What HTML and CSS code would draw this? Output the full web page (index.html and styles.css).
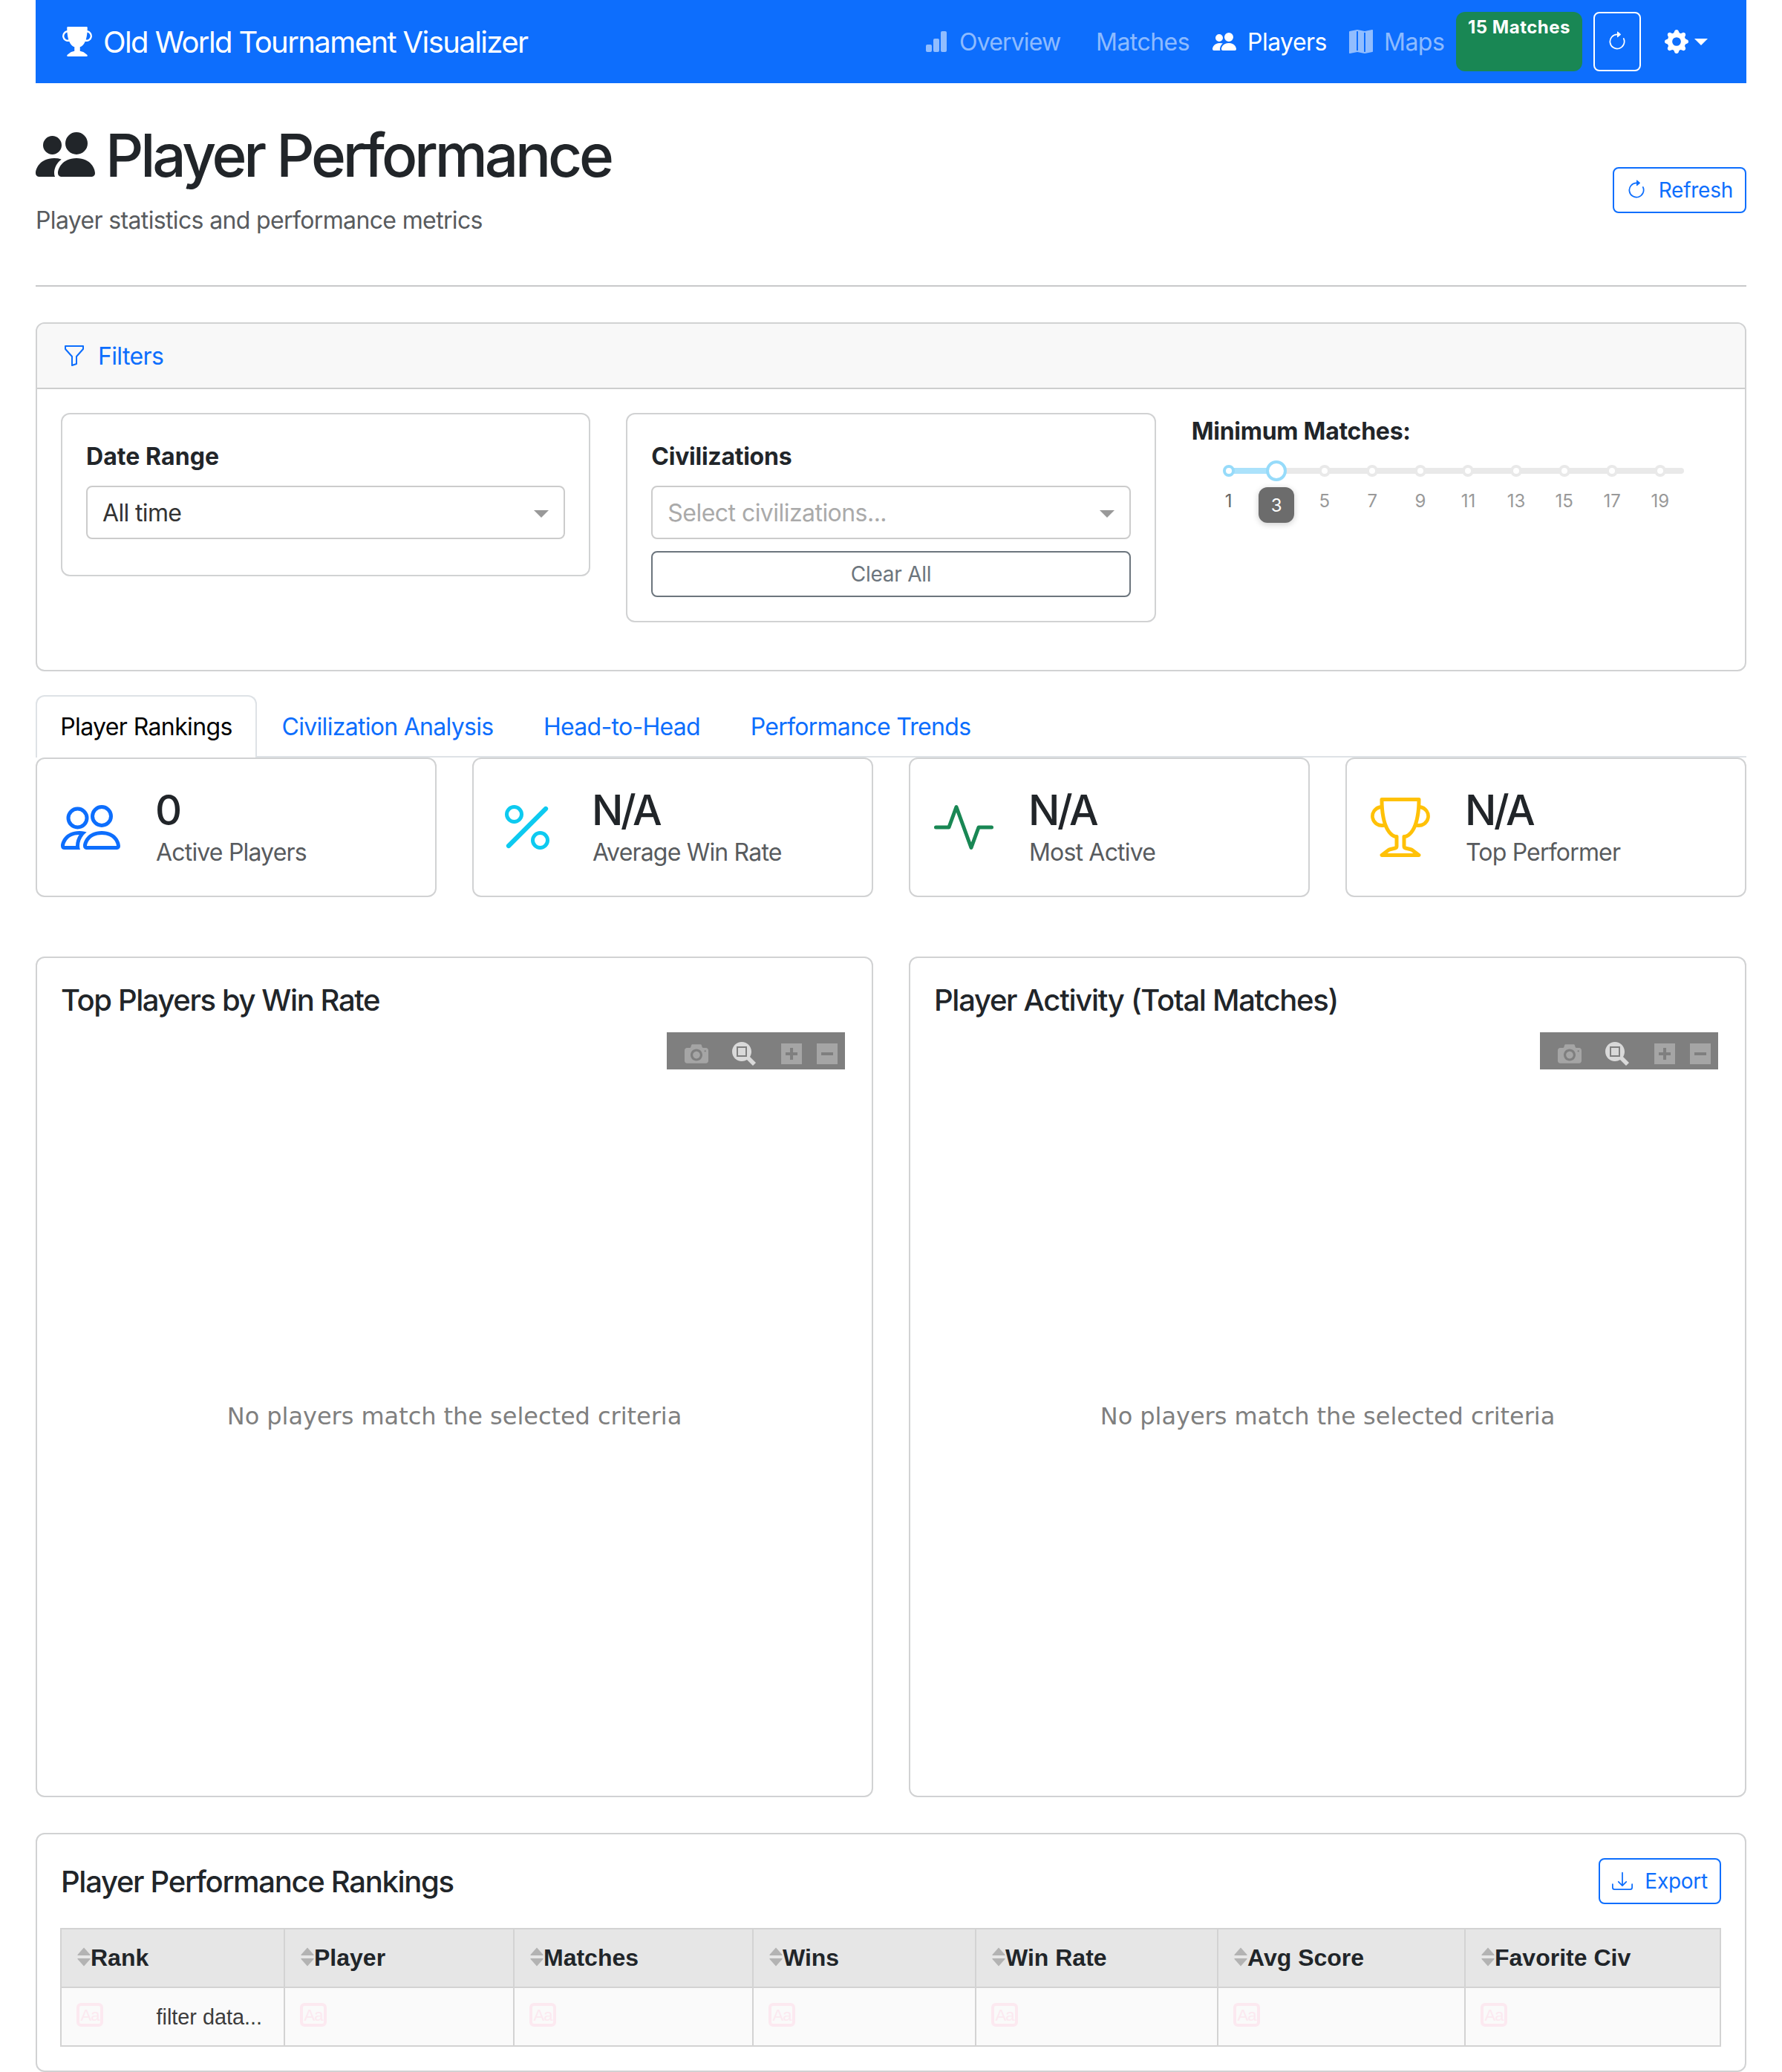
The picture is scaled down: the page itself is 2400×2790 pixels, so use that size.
FILE: index.html
```html
<!DOCTYPE html>
<html lang="en">
<head>
<meta charset="utf-8">
<title>Old World Tournament Visualizer</title>
<link rel="stylesheet" href="styles.css">
</head>
<body>
<svg class="sprite" aria-hidden="true">
  <symbol id="trophy-fill" viewBox="0 0 16 16"><path d="M2.5.5A.5.5 0 0 1 3 0h10a.5.5 0 0 1 .5.5q0 .807-.034 1.536a3 3 0 1 1-1.133 5.89c-.79 1.865-1.878 2.777-2.833 3.011v2.173l1.425.356c.194.048.377.135.537.255L13.3 15.1a.5.5 0 0 1-.3.9H3a.5.5 0 0 1-.3-.9l1.838-1.379c.16-.12.343-.207.537-.255L6.5 13.11v-2.173c-.955-.234-2.043-1.146-2.833-3.012a3 3 0 1 1-1.132-5.89A33 33 0 0 1 2.5.5m.099 2.54a2 2 0 0 0 .72 3.935c-.333-1.05-.588-2.346-.72-3.935m10.083 3.935a2 2 0 0 0 .72-3.935c-.133 1.59-.388 2.885-.72 3.935"/></symbol>
  <symbol id="trophy" viewBox="0 0 16 16"><path d="M2.5.5A.5.5 0 0 1 3 0h10a.5.5 0 0 1 .5.5q0 .807-.034 1.536a3 3 0 1 1-1.133 5.89c-.79 1.865-1.878 2.777-2.833 3.011v2.173l1.425.356c.194.048.377.135.537.255L13.3 15.1a.5.5 0 0 1-.3.9H3a.5.5 0 0 1-.3-.9l1.838-1.379c.16-.12.343-.207.537-.255L6.5 13.11v-2.173c-.955-.234-2.043-1.146-2.833-3.012a3 3 0 1 1-1.132-5.89A33 33 0 0 1 2.5.5m.099 2.54a2 2 0 0 0 .72 3.935c-.333-1.05-.588-2.346-.72-3.935m10.083 3.935a2 2 0 0 0 .72-3.935c-.133 1.59-.388 2.885-.72 3.935M3.504 1q.01.775.056 1.469c.13 2.028.457 3.546.87 4.667C5.294 9.48 6.484 10 7 10a.5.5 0 0 1 .5.5v2.61a1 1 0 0 1-.757.97l-1.426.356a.5.5 0 0 0-.179.085L4.5 15h7l-.638-.479a.5.5 0 0 0-.18-.085l-1.425-.356a1 1 0 0 1-.757-.97V10.5A.5.5 0 0 1 9 10c.516 0 1.706-.52 2.57-2.864.413-1.12.74-2.64.87-4.667q.045-.694.056-1.469z"/></symbol>
  <symbol id="bar-chart-fill" viewBox="0 0 16 16"><path d="M1 11a1 1 0 0 1 1-1h2a1 1 0 0 1 1 1v3a1 1 0 0 1-1 1H2a1 1 0 0 1-1-1zm5-4a1 1 0 0 1 1-1h2a1 1 0 0 1 1 1v7a1 1 0 0 1-1 1H7a1 1 0 0 1-1-1zm5-5a1 1 0 0 1 1-1h2a1 1 0 0 1 1 1v12a1 1 0 0 1-1 1h-2a1 1 0 0 1-1-1z"/></symbol>
  <symbol id="people-fill" viewBox="0 0 16 16"><path d="M7 14s-1 0-1-1 1-4 5-4 5 3 5 4-1 1-1 1zm4-6a3 3 0 1 0 0-6 3 3 0 0 0 0 6m-5.784 6A2.24 2.24 0 0 1 5 13c0-1.355.68-2.75 1.936-3.72A6.3 6.3 0 0 0 5 9c-4 0-5 3-5 4s1 1 1 1zM4.5 8a2.5 2.5 0 1 0 0-5 2.5 2.5 0 0 0 0 5"/></symbol>
  <symbol id="people" viewBox="0 0 16 16"><path d="M15 14s1 0 1-1-1-4-5-4-5 3-5 4 1 1 1 1zm-7.978-1L7 12.996c.001-.264.167-1.03.76-1.72C8.312 10.629 9.282 10 11 10c1.717 0 2.687.63 3.24 1.276.593.69.758 1.457.76 1.72l-.008.002-.014.002zM11 7a2 2 0 1 0 0-4 2 2 0 0 0 0 4m3-2a3 3 0 1 1-6 0 3 3 0 0 1 6 0M6.936 9.28a6 6 0 0 0-1.23-.247A7 7 0 0 0 5 9c-4 0-5 3-5 4q0 1 1 1h4.216A2.24 2.24 0 0 1 5 13c0-1.01.377-2.042 1.09-2.904.243-.294.526-.569.846-.816M4.92 10A5.5 5.5 0 0 0 4 13H1c0-.26.164-1.03.76-1.724.545-.636 1.492-1.256 3.16-1.275ZM1.5 5.5a3 3 0 1 1 6 0 3 3 0 0 1-6 0m3-2a2 2 0 1 0 0 4 2 2 0 0 0 0-4"/></symbol>
  <symbol id="map-fill" viewBox="0 0 16 16"><path fill-rule="evenodd" d="M16 .5a.5.5 0 0 0-.598-.49L10.5.99 5.598.01a.5.5 0 0 0-.196 0l-5 1A.5.5 0 0 0 0 1.5v14a.5.5 0 0 0 .598.49l4.902-.98 4.902.98a.5.5 0 0 0 .196 0l5-1A.5.5 0 0 0 16 14.5zM5 14.09V1.11l.5-.1.5.1v12.98l-.402-.08a.5.5 0 0 0-.196 0zm5 .8V1.91l.402.08a.5.5 0 0 0 .196 0L11 1.91v12.98l-.5.1z"/></symbol>
  <symbol id="gear-fill" viewBox="0 0 16 16"><path d="M9.405 1.05c-.413-1.4-2.397-1.4-2.81 0l-.1.34a1.464 1.464 0 0 1-2.105.872l-.31-.17c-1.283-.698-2.686.705-1.987 1.987l.169.311c.446.82.023 1.841-.872 2.105l-.34.1c-1.4.413-1.4 2.397 0 2.81l.34.1a1.464 1.464 0 0 1 .872 2.105l-.17.31c-.698 1.283.705 2.686 1.987 1.987l.311-.169a1.464 1.464 0 0 1 2.105.872l.1.34c.413 1.4 2.397 1.4 2.81 0l.1-.34a1.464 1.464 0 0 1 2.105-.872l.31.17c1.283.698 2.686-.705 1.987-1.987l-.169-.311a1.464 1.464 0 0 1 .872-2.105l.34-.1c1.4-.413 1.4-2.397 0-2.81l-.34-.1a1.464 1.464 0 0 1-.872-2.105l.17-.31c.698-1.283-.705-2.686-1.987-1.987l-.311.169a1.464 1.464 0 0 1-2.105-.872zM8 10.93a2.929 2.929 0 1 1 0-5.86 2.929 2.929 0 0 1 0 5.858z"/></symbol>
  <symbol id="arrow-clockwise" viewBox="0 0 16 16"><path fill-rule="evenodd" d="M8 3a5 5 0 1 0 4.546 2.914.5.5 0 0 1 .908-.417A6 6 0 1 1 8 2z"/><path d="M8 4.466V.534a.25.25 0 0 1 .41-.192l2.36 1.966c.12.1.12.284 0 .384L8.41 4.658A.25.25 0 0 1 8 4.466"/></symbol>
  <symbol id="funnel" viewBox="0 0 16 16"><path d="M1.5 1.5A.5.5 0 0 1 2 1h12a.5.5 0 0 1 .5.5v2a.5.5 0 0 1-.128.334L10 8.692V13.5a.5.5 0 0 1-.342.474l-3 1A.5.5 0 0 1 6 14.5V8.692L1.628 3.834A.5.5 0 0 1 1.5 3.5zm1 .5v1.308l4.372 4.858A.5.5 0 0 1 7 8.5v5.306l2-.666V8.5a.5.5 0 0 1 .128-.334L13.5 3.308V2z"/></symbol>
  <symbol id="percent" viewBox="0 0 16 16"><path d="M13.442 2.558a.625.625 0 0 1 0 .884l-10 10a.625.625 0 1 1-.884-.884l10-10a.625.625 0 0 1 .884 0M4.5 6a1.5 1.5 0 1 1 0-3 1.5 1.5 0 0 1 0 3m0 1a2.5 2.5 0 1 0 0-5 2.5 2.5 0 0 0 0 5m7 6a1.5 1.5 0 1 1 0-3 1.5 1.5 0 0 1 0 3m0 1a2.5 2.5 0 1 0 0-5 2.5 2.5 0 0 0 0 5"/></symbol>
  <symbol id="activity" viewBox="0 0 16 16"><path fill-rule="evenodd" d="M6 2a.5.5 0 0 1 .47.33L10 12.036l1.53-4.208A.5.5 0 0 1 12 7.5h3.5a.5.5 0 0 1 0 1h-3.15l-1.88 5.17a.5.5 0 0 1-.94 0L6 3.964 4.47 8.171A.5.5 0 0 1 4 8.5H.5a.5.5 0 0 1 0-1h3.15l1.88-5.17A.5.5 0 0 1 6 2"/></symbol>
  <symbol id="download" viewBox="0 0 16 16"><path d="M.5 9.9a.5.5 0 0 1 .5.5v2.5a1 1 0 0 0 1 1h12a1 1 0 0 0 1-1v-2.5a.5.5 0 0 1 1 0v2.5a2 2 0 0 1-2 2H2a2 2 0 0 1-2-2v-2.5a.5.5 0 0 1 .5-.5"/><path d="M7.646 11.854a.5.5 0 0 0 .708 0l3-3a.5.5 0 0 0-.708-.708L8.5 10.293V1.5a.5.5 0 0 0-1 0v8.793L5.354 8.146a.5.5 0 1 0-.708.708z"/></symbol>
  <symbol id="camera" viewBox="0 0 1000 1000"><path transform="matrix(1 0 0 -1 0 850)" d="m500 450c-83 0-150-67-150-150 0-83 67-150 150-150 83 0 150 67 150 150 0 83-67 150-150 150z m400 150h-120c-16 0-34 13-39 29l-31 93c-6 15-23 28-40 28h-340c-16 0-34-13-39-28l-31-94c-6-15-23-28-40-28h-120c-55 0-100-45-100-100v-450c0-55 45-100 100-100h800c55 0 100 45 100 100v450c0 55-45 100-100 100z m-400-550c-138 0-250 112-250 250 0 138 112 250 250 250 138 0 250-112 250-250 0-138-112-250-250-250z m365 380c-19 0-35 16-35 35 0 19 16 35 35 35 19 0 35-16 35-35 0-19-16-35-35-35z"/></symbol>
  <symbol id="zoombox" viewBox="0 0 1000 1000"><path transform="matrix(1 0 0 -1 0 850)" d="m1000-25l-250 251c40 63 63 138 63 218 0 224-182 406-407 406-224 0-406-182-406-406s183-406 407-406c80 0 155 22 218 62l250-250 125 125z m-812 250l0 438 437 0 0-438-437 0z m62 375l313 0 0-312-313 0 0 312z"/></symbol>
  <symbol id="zoom-in" viewBox="0 0 875 1000"><path transform="matrix(1 0 0 -1 0 850)" d="m1 787l0-875 875 0 0 875-875 0z m687-500l-187 0 0-187-125 0 0 187-188 0 0 125 188 0 0 187 125 0 0-187 187 0 0-125z"/></symbol>
  <symbol id="zoom-out" viewBox="0 0 875 1000"><path transform="matrix(1 0 0 -1 0 850)" d="m0 788l0-876 876 0 0 876-876 0z m688-500l-500 0 0 125 500 0 0-125z"/></symbol>
  <symbol id="sort" viewBox="0 0 18 28"><path d="M9 1.500L17.500 11Q18 12 17 12H1Q0 12 .5 11zM9 26.500L17.500 17Q18 16 17 16H1Q0 16 .5 17z"/></symbol>
</svg>

<div class="container">
  <nav class="navbar">
    <a class="brand"><svg class="icon icon-40"><use href="#trophy-fill"/></svg><span>Old World Tournament Visualizer</span></a>
    <div class="nav">
      <a class="nav-link overview"><svg class="icon icon-32"><use href="#bar-chart-fill"/></svg><span>Overview</span></a>
      <a class="nav-link"><span>Matches</span></a>
      <a class="nav-link active"><svg class="icon icon-32"><use href="#people-fill"/></svg><span>Players</span></a>
      <a class="nav-link"><svg class="icon icon-32"><use href="#map-fill"/></svg><span>Maps</span></a>
      <span class="badge">15 Matches</span>
      <button class="btn btn-light"><svg class="icon icon-28"><use href="#arrow-clockwise"/></svg></button>
      <a class="nav-link active dropdown"><svg class="icon icon-32"><use href="#gear-fill"/></svg></a>
    </div>
  </nav>

  <header class="page-header">
    <div>
      <h1><svg class="icon icon-80"><use href="#people-fill"/></svg><span>Player Performance</span></h1>
      <p class="muted subtitle">Player statistics and performance metrics</p>
    </div>
    <button class="btn btn-primary"><svg class="icon icon-28"><use href="#arrow-clockwise"/></svg><span>Refresh</span></button>
  </header>
  <hr>

  <section class="card filters">
    <div class="card-header"><svg class="icon icon-32"><use href="#funnel"/></svg><span>Filters</span></div>
    <div class="filter-grid">
      <div class="card filter-card">
        <label>Date Range</label>
        <div class="select"><span>All time</span></div>
      </div>
      <div class="card filter-card civ">
        <label class="tight">Civilizations</label>
        <div class="select placeholder"><span>Select civilizations...</span></div>
        <button class="btn btn-secondary">Clear All</button>
      </div>
      <div>
        <label class="tight">Minimum Matches:</label>
        <div class="slider">
          <div class="track" style="width:10.526%"></div>
          <i class="dot on" style="left:0%"></i><i class="dot" style="left:21.053%"></i><i class="dot" style="left:31.579%"></i><i class="dot" style="left:42.105%"></i><i class="dot" style="left:52.632%"></i><i class="dot" style="left:63.158%"></i><i class="dot" style="left:73.684%"></i><i class="dot" style="left:84.211%"></i><i class="dot" style="left:94.737%"></i>
          <i class="handle" style="left:10.526%"></i>
          <span class="mark on" style="left:0%">1</span><span class="mark" style="left:21.053%">5</span><span class="mark" style="left:31.579%">7</span><span class="mark" style="left:42.105%">9</span><span class="mark" style="left:52.632%">11</span><span class="mark" style="left:63.158%">13</span><span class="mark" style="left:73.684%">15</span><span class="mark" style="left:84.211%">17</span><span class="mark" style="left:94.737%">19</span>
          <span class="tip" style="left:10.526%">3</span>
        </div>
      </div>
    </div>
  </section>

  <div class="tabs">
    <a class="tab active">Player Rankings</a>
    <a class="tab">Civilization Analysis</a>
    <a class="tab">Head-to-Head</a>
    <a class="tab">Performance Trends</a>
  </div>

  <section class="stats">
    <div class="card stat"><svg class="icon icon-80 blue"><use href="#people"/></svg><div><h3>0</h3><p class="muted">Active Players</p></div></div>
    <div class="card stat"><svg class="icon icon-80 cyan"><use href="#percent"/></svg><div><h3>N/A</h3><p class="muted">Average Win Rate</p></div></div>
    <div class="card stat"><svg class="icon icon-80 green"><use href="#activity"/></svg><div><h3>N/A</h3><p class="muted">Most Active</p></div></div>
    <div class="card stat"><svg class="icon icon-80 yellow"><use href="#trophy"/></svg><div><h3>N/A</h3><p class="muted">Top Performer</p></div></div>
  </section>

  <section class="charts">
    <div class="card chart">
      <h5 class="win-rate">Top Players by Win Rate</h5>
      <div class="modebar"><svg class="mb"><use href="#camera"/></svg><svg class="mb sel"><use href="#zoombox"/></svg><svg class="mb sq"><use href="#zoom-in"/></svg><svg class="mb sq"><use href="#zoom-out"/></svg></div>
      <p class="empty">No players match the selected criteria</p>
    </div>
    <div class="card chart">
      <h5>Player Activity (Total Matches)</h5>
      <div class="modebar"><svg class="mb"><use href="#camera"/></svg><svg class="mb sel"><use href="#zoombox"/></svg><svg class="mb sq"><use href="#zoom-in"/></svg><svg class="mb sq"><use href="#zoom-out"/></svg></div>
      <p class="empty">No players match the selected criteria</p>
    </div>
  </section>

  <section class="card rankings">
    <div class="rankings-head">
      <h5>Player Performance Rankings</h5>
      <button class="btn btn-primary"><svg class="icon icon-28"><use href="#download"/></svg><span>Export</span></button>
    </div>
    <table>
      <colgroup><col class="c1"><col class="c2"><col class="c3"><col class="c4"><col class="c5"><col class="c6"><col></colgroup>
      <tr>
        <th><div><svg class="sort"><use href="#sort"/></svg><span>Rank</span></div></th>
        <th><div><svg class="sort"><use href="#sort"/></svg><span>Player</span></div></th>
        <th><div><svg class="sort"><use href="#sort"/></svg><span>Matches</span></div></th>
        <th><div><svg class="sort"><use href="#sort"/></svg><span>Wins</span></div></th>
        <th><div><svg class="sort"><use href="#sort"/></svg><span>Win Rate</span></div></th>
        <th><div><svg class="sort"><use href="#sort"/></svg><span>Avg Score</span></div></th>
        <th><div><svg class="sort"><use href="#sort"/></svg><span>Favorite Civ</span></div></th>
      </tr>
      <tr>
        <td><div><span class="case">Aa</span><span class="filter-text">filter data...</span></div></td>
        <td><div><span class="case">Aa</span></div></td>
        <td><div><span class="case">Aa</span></div></td>
        <td><div><span class="case">Aa</span></div></td>
        <td><div><span class="case">Aa</span></div></td>
        <td><div><span class="case">Aa</span></div></td>
        <td><div><span class="case">Aa</span></div></td>
      </tr>
    </table>
  </section>
</div>
</body>
</html>
```
FILE: styles.css
```css
* { box-sizing: border-box; }
body {
  margin: 0;
  background: #fff;
  color: #212529;
  font: 400 32px/1.5 Inter, "Liberation Sans", sans-serif;
  letter-spacing: -0.02em;
}
h1, h3, h5, p { margin: 0; font-weight: 500; line-height: 1.2; }
p { font-weight: 400; line-height: 1.5; }
h5 { padding-top: 1px; font-size: 40px; letter-spacing: -0.0325em; }
hr { margin: 0; border: 0; height: 2px; background: #c8c9ca; }
button { font-family: inherit; }
label { display: block; height: 48px; padding-top: 1px; font-weight: 700; letter-spacing: 0.0024em; }
label.tight { letter-spacing: -0.008em; }
.sprite { display: none; }
.container { width: 2304px; margin: 0 auto; }

.icon { display: block; flex: none; fill: currentColor; }
.icon-28 { width: 28px; height: 28px; }
.icon-32 { width: 32px; height: 32px; }
.icon-40 { width: 40px; height: 40px; }
.icon-80 { width: 80px; height: 80px; }
.muted { color: #585b5e; }
.subtitle { height: 48px; padding-top: 1px; }
.blue { color: #0d6efd; }
.cyan { color: #0dcaf0; }
.green { color: #198754; }
.yellow { color: #ffc107; }

/* Navigation */
.navbar {
  display: flex;
  align-items: center;
  justify-content: space-between;
  height: 112px;
  padding: 0 50px 0 36px;
  background: #0d6efd;
}
.brand {
  display: flex;
  align-items: center;
  gap: 15px;
  color: #fff;
  font-size: 40px;
  letter-spacing: -0.0397em;
  white-space: nowrap;
}
.brand span, .nav-link span, .card-header span, .select span { padding-top: 2px; }
.nav {
  display: grid;
  grid-template-columns: 231px 157px 184px 144px 185px 96px 60px;
  align-items: center;
}
.nav-link {
  display: flex;
  align-items: center;
  gap: 15px;
  color: rgba(255, 255, 255, .55);
  letter-spacing: -0.0165em;
}
.nav-link.overview { letter-spacing: -0.026em; }
.nav-link.active { color: #fff; }
.dropdown { gap: 8px; }
.dropdown::after {
  content: "";
  border: 9.6px solid transparent;
  border-top-color: #fff;
  border-bottom: 0;
}
.badge {
  width: 170px;
  height: 80px;
  padding-top: 9.4px;
  border-radius: 12px;
  background: #198754;
  color: #fff;
  font-size: 24px;
  font-weight: 700;
  line-height: 1;
  letter-spacing: 0.0205em;
  text-align: center;
}

/* Buttons */
.btn {
  display: flex;
  align-items: center;
  justify-content: center;
  height: 62px;
  padding: 0 16px;
  border: 2px solid currentColor;
  border-radius: 8px;
  background: transparent;
  font-size: 28px;
  letter-spacing: -0.009em;
  gap: 16px;
}
.btn-light { width: 64px; height: 80px; color: #fff; }
.btn-primary { color: #0d6efd; }
.btn-secondary { width: 100%; color: #6c757d; }

/* Heading */
.page-header {
  display: flex;
  align-items: center;
  justify-content: space-between;
  padding: 48px 0 32px;
}
.page-header > div { padding-bottom: 32px; }
h1 {
  display: flex;
  align-items: center;
  gap: 14px;
  height: 96px;
  margin-bottom: 16px;
  font-size: 80px;
  letter-spacing: -0.0521em;
}
h1 span { padding-top: 2px; }

/* Filters */
.card { border: 2px solid #d1d2d3; border-radius: 12px; background: #fff; }
.filters { height: 470px; margin-top: 48px; overflow: hidden; }
.card-header {
  display: flex;
  align-items: center;
  gap: 16px;
  height: 88px;
  padding: 0 34px;
  border-bottom: 2px solid #cdcece;
  background: #f8f8f8;
  color: #0d6efd;
}
.filter-grid {
  display: grid;
  grid-template-columns: repeat(3, 1fr);
  gap: 48px;
  align-items: start;
  padding: 32px;
}
.filter-card { display: grid; gap: 16px; padding: 32px 32px 48px; }
.filter-card.civ { padding-bottom: 32px; }
.select {
  display: flex;
  align-items: center;
  justify-content: space-between;
  height: 72px;
  padding: 0 20px;
  border: 2px solid #ccc;
  border-radius: 8px;
  color: #333;
}
.select::after {
  content: "";
  margin-top: 4px;
  border: 10px solid transparent;
  border-top-color: #999;
  border-bottom: 0;
}
.placeholder { color: #aaa; letter-spacing: -0.0169em; }

.slider {
  position: relative;
  height: 8px;
  margin: 26px 50px 0;
  border-radius: 4px;
  background: #e9e9e9;
}
.track { height: 8px; border-radius: 4px; background: #abe2fb; }
.dot, .handle {
  position: absolute;
  top: 50%;
  width: 16px;
  height: 16px;
  border: 4px solid #e9e9e9;
  border-radius: 50%;
  background: #fff;
  transform: translate(-50%, -50%);
}
.handle { width: 28px; height: 28px; }
.dot.on, .handle { border-color: #96dbfa; }
.mark, .tip {
  position: absolute;
  top: 27px;
  color: #999;
  font-size: 24px;
  line-height: 36px;
  letter-spacing: 0;
  transform: translateX(-50%);
}
.mark.on { color: #666; }
.tip {
  top: 26px;
  width: 48px;
  height: 48px;
  border-radius: 12px;
  background: #6c6c6c;
  box-shadow: 0 2px 8px rgba(0, 0, 0, .2);
  color: #fff;
  line-height: 49px;
  text-align: center;
}

/* Tabs */
.tabs {
  display: grid;
  grid-template-columns: 298px 352px 279px 364px;
  margin-top: 32px;
  height: 84px;
  box-shadow: inset 0 -2px #dee2e6;
}
.tab {
  padding-top: 17px;
  border: 2px solid transparent;
  border-bottom: 0;
  border-radius: 12px 12px 0 0;
  color: #0d6efd;
  letter-spacing: -0.022em;
  text-align: center;
  white-space: nowrap;
}
.tab.active { border-color: #dee2e6; background: #fff; color: #000; letter-spacing: -0.019em; }

/* Stats */
.stats { display: grid; grid-template-columns: repeat(4, 1fr); gap: 48px; }
.stat {
  display: flex;
  align-items: center;
  gap: 48px;
  height: 188px;
  padding: 0 32px;
}
.stat h3 { height: 67px; padding-top: 1px; margin-left: -1px; font-size: 56px; letter-spacing: -0.06em; }
.stat p { letter-spacing: -0.0255em; }

/* Charts */
.charts { display: grid; grid-template-columns: 1fr 1fr; gap: 48px; margin: 80px 0 48px; }
.chart { position: relative; height: 1132px; padding: 32px; }
.win-rate { letter-spacing: -0.0352em; }
.modebar {
  position: absolute;
  top: 100px;
  right: 36px;
  display: flex;
  width: 240px;
  height: 50px;
  padding: 13px 0 0 24px;
  background: #7f7f7f;
}
.mb { flex: none; width: 32px; height: 32px; margin-right: 32px; fill: #a5a5a5; }
.mb.sel { margin-right: 34px; fill: #d9d9d9; }
.mb.sq { width: 28px; margin-right: 20px; }
.empty {
  padding-top: 512px;
  color: #7f7f7f;
  font-family: "DejaVu Sans", sans-serif;
  letter-spacing: -0.04px;
  text-align: center;
}

/* Rankings table */
.rankings { height: 322px; padding: 32px; }
.rankings-head { display: flex; align-items: center; justify-content: space-between; }
table {
  width: 2237px;
  margin: 32px 0 0 -1px;
  border-right: 2px solid #d3d3d3;
  border-spacing: 0;
  table-layout: fixed;
  font-family: "Liberation Sans", Arial, sans-serif;
  letter-spacing: 0;
}
.c1 { width: 301px; }
.c2 { width: 309px; }
.c3 { width: 322px; }
.c4 { width: 300px; }
.c5 { width: 326px; }
.c6 { width: 333px; }
th, td { padding: 0; border: 0 solid #d3d3d3; border-width: 0 0 2px 2px; background: #fafafa; }
th { border-top-width: 2px; background: #e6e6e6; }
th div { display: flex; align-items: center; height: 77px; padding-left: 21px; font-weight: 700; }
th span { padding-bottom: 2px; }
td div { display: flex; align-items: center; justify-content: space-between; height: 77px; padding: 0 29px 0 20px; }
.sort { width: 18px; height: 28px; margin-top: -3px; fill: #b3b3b3; }
.case {
  width: 36px;
  height: 32px;
  margin-top: -5px;
  border: 4px solid #fce9f0;
  border-radius: 6px;
  color: #fce9f0;
  font-size: 22px;
  line-height: 25px;
  letter-spacing: -1px;
  text-align: center;
}
.filter-text { padding-top: 2px; color: #3c3c3c; font-size: 28.8px; }
```
